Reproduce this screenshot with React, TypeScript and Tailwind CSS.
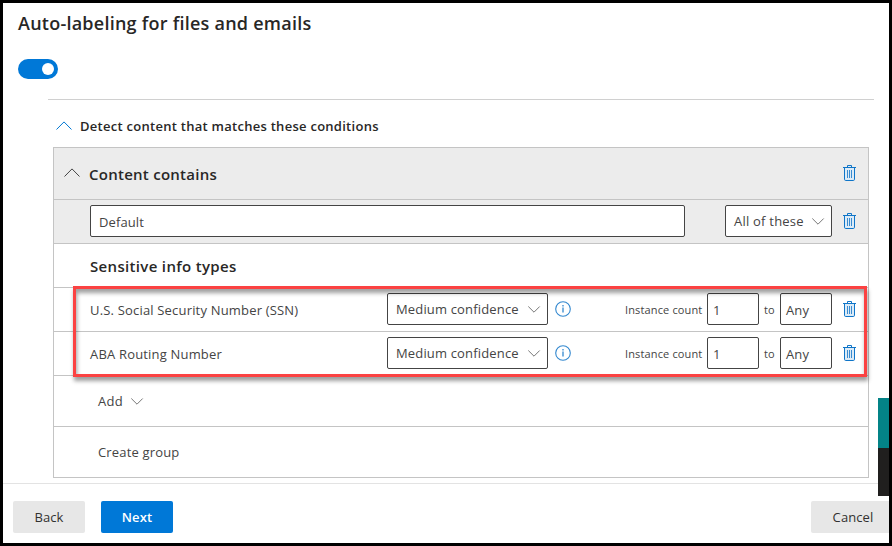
type IconProps = { className?: string };

function Chevron({ up, className = '' }: IconProps & { up?: boolean }) {
  return (
    <svg viewBox="0 0 16 9" width="16" height="9" fill="none" stroke="currentColor" strokeWidth="1" className={`shrink-0 ${className}`}>
      <path d={up ? 'M0.5 8.5 8 0.9 15.5 8.5' : 'M2.3 1.5 8 7.2 13.7 1.5'} />
    </svg>
  );
}

function Trash() {
  return (
    <svg viewBox="0 0 13 16" width="13" height="16" fill="none" className="mr-3 shrink-0 text-[#0f75c8]">
      <rect x="1.5" y="2.5" width="10" height="13" fill="#dcebf7" />
      <path d="M4.5 2V0.5h4V2M0 2.5h13" stroke="currentColor" />
      <path d="M1.5 3v11.2q0 1.3 1.2 1.3h7.6q1.2 0 1.2-1.3V3" stroke="currentColor" />
      <path d="M4.5 5v8M6.5 5v8M8.5 5v8" stroke="#3a8cd0" />
    </svg>
  );
}

function Info() {
  return (
    <svg viewBox="0 0 16 16" width="16" height="16" fill="none" stroke="#3388cf" className="mb-px ml-[7px] shrink-0">
      <circle cx="8" cy="8" r="7.3" strokeWidth="1.1" />
      <path d="M8 6.6v5M8 4v1.4" strokeWidth="1.3" />
    </svg>
  );
}

function Select({ label, className }: { label: string; className: string }) {
  return (
    <div className={`flex h-8 shrink-0 items-center justify-between rounded-[2px] border border-[#444] bg-white pr-[5px] pl-2 ${className}`}>
      <span>{label}</span>
      <Chevron className="text-[#777]" />
    </div>
  );
}

function Field({ value }: { value: string }) {
  return <div className="flex h-8 w-[52px] shrink-0 items-center rounded-[2px] border border-[#444] bg-white pt-0.5 pl-[5px]">{value}</div>;
}

function InfoTypeRow({ name }: { name: string }) {
  return (
    <div className="flex h-11 items-center border-b border-[#c4c4c4] pb-px pl-9">
      <span className="w-[297px] pt-0.5 tracking-[0.18px]">{name}</span>
      <Select label="Medium confidence" className="w-[161px] tracking-[0.16px]" />
      <Info />
      <span className="ml-auto w-[82px] pt-0.5 text-[11px] tracking-[0.14px]">Instance count</span>
      <Field value="1" />
      <span className="w-[21px] pt-0.5 pl-[5px] text-[11px]">to</span>
      <Field value="Any" />
      <span className="w-[11px] shrink-0" />
      <Trash />
    </div>
  );
}

export default function App() {
  return (
    <div className="relative flex h-[546px] w-[892px] flex-col overflow-hidden border-[3px] border-black bg-white font-['Open_Sans','Noto_Sans',sans-serif] text-[13px] leading-5 tracking-[0.1px] text-[#444]">
      <h1 className="mt-[8px] ml-[15px] text-[18px] leading-6 font-semibold tracking-[0.24px] text-[#282726]">Auto-labeling for files and emails</h1>
      <div className="mt-[24px] ml-[15px] flex h-5 w-10 shrink-0 items-center justify-end rounded-full bg-[#0078d7] pr-1">
        <span className="h-3 w-3 rounded-full bg-white" />
      </div>
      <div className="mt-5 ml-[45px] h-px w-[826px] shrink-0 bg-[#d0d0d0]" />
      <div className="mt-4 ml-[53px] flex h-5 shrink-0 items-center gap-2 font-semibold tracking-[0.27px] text-[#282726]">
        <Chevron up className="mb-px text-[#0078d4]" />
        <span>Detect content that matches these conditions</span>
      </div>

      <section className="mt-[11px] ml-[50px] w-[816px] shrink-0 border border-[#c4c4c4]">
        <div className="flex h-[52px] items-center border-b border-[#c4c4c4] bg-[#ececec] pb-px pl-[10px]">
          <Chevron up className="mb-px text-[#444]" />
          <h2 className="ml-[9px] pt-0.5 text-[15px] font-semibold tracking-[0.26px] text-[#282726]">Content contains</h2>
          <span className="ml-auto" />
          <Trash />
        </div>
        <div className="flex h-11 items-center border-b border-[#c4c4c4] bg-[#ececec] pb-px pl-9">
          <div className="flex h-8 w-[595px] items-center rounded-[2px] border border-[#444] bg-white pt-0.5 pl-2">Default</div>
          <Select label="All of these" className="ml-10 w-[107px] tracking-[0.22px]" />
          <span className="ml-auto" />
          <Trash />
        </div>
        <div className="flex h-11 items-center border-b border-[#c4c4c4] pt-px pb-px pl-9 text-[15px] font-semibold tracking-[0.33px] text-[#282726]">Sensitive info types</div>
        <InfoTypeRow name="U.S. Social Security Number (SSN)" />
        <InfoTypeRow name="ABA Routing Number" />
        <div className="flex h-[51px] items-center gap-[6px] border-b border-[#c4c4c4] pl-11 tracking-[0.3px]">
          <span>Add</span>
          <Chevron className="text-[#777]" />
        </div>
        <div className="flex h-[50px] items-center pl-11 tracking-[0.17px]">Create group</div>
      </section>

      <footer className="mt-[5px] flex h-[60px] shrink-0 items-start border-t border-[#e3e3e3] pt-[17px] pl-[10px] text-[#323130]">
        <button className="h-8 w-[72px] rounded-[2px] bg-[#e7e7e7]">Back</button>
        <button className="ml-4 h-8 w-[72px] rounded-[2px] bg-[#0078d7] font-semibold text-white">Next</button>
        <button className="ml-auto h-8 w-[78px] rounded-l-[2px] bg-[#e7e7e7] pl-1.5">Cancel</button>
      </footer>

      <div className="pointer-events-none absolute top-[283px] left-[70px] h-[91px] w-[794px] border-[3px] border-[#fb4242] shadow-[1px_4px_4px_rgba(0,0,0,0.38),inset_1px_4px_4px_rgba(0,0,0,0.38)]" />
      <div className="absolute top-[395px] right-0 flex w-[11px] flex-col">
        <div className="h-[50px] bg-[#038387]" />
        <div className="h-12 bg-[#201f1e]" />
      </div>
    </div>
  );
}
